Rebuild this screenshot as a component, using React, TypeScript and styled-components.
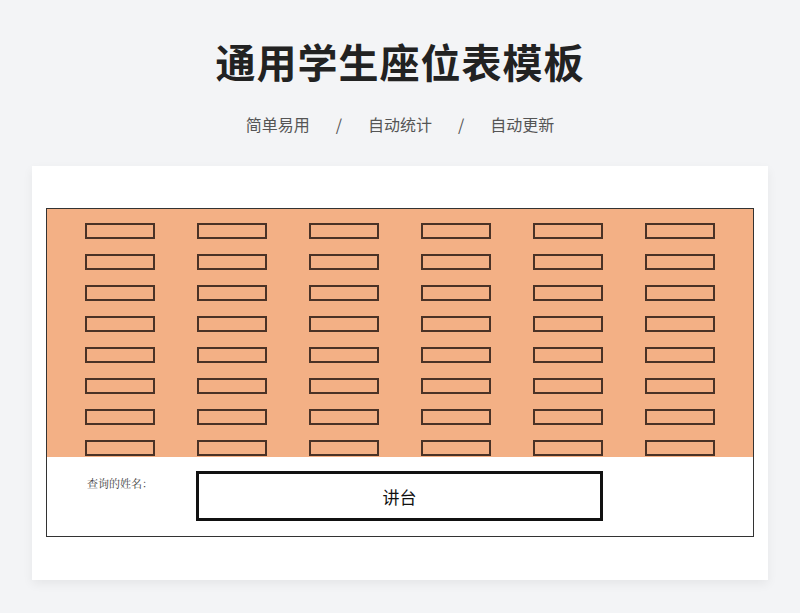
import React from "react";
import styled, { createGlobalStyle } from "styled-components";

const Global = createGlobalStyle`
  html, body { margin: 0; padding: 0; background: #f3f4f6; }
  body { font-family: "Noto Sans CJK SC", "Noto Sans", sans-serif; }
`;

const Page = styled.div`
  width: 800px; height: 613px; box-sizing: border-box;
  padding-top: 33px; display: flex; flex-direction: column; align-items: center;
`;
const Title = styled.h1`
  margin: 0; height: 56px; line-height: 56px; font-size: 40px; font-weight: 700; color: #222;
  letter-spacing: 1px;
`;
const Sub = styled.div`
  margin-top: 23px; display: flex; gap: 26px; font-size: 16px; color: #555; line-height: 24px;
`;
const Card = styled.div`
  margin-top: 30px; width: 736px; height: 414px; background: #fff;
  box-shadow: 0 4px 10px rgba(0,0,0,0.06); box-sizing: border-box; padding: 42px 14px 0 14px;
`;
const Frame = styled.div`
  width: 708px; height: 329px; border: 1.5px solid #333; box-sizing: border-box;
  display: flex; flex-direction: column;
`;
const Seats = styled.div`
  background: #f3b085; height: 248px; box-sizing: border-box; padding: 14px 0 0 38px;
  display: grid; grid-template-columns: repeat(6, 70px); column-gap: 42px;
  grid-auto-rows: 16px; row-gap: 15px;
`;
const Seat = styled.div`
  border: 2px solid #4a3226; box-sizing: border-box;
`;
const Bottom = styled.div`
  display: flex; padding: 14px 0 0 40px;
`;
const Label = styled.div`
  font-family: "Noto Serif CJK SC", "Noto Sans CJK SC", serif; font-size: 11px; color: #444;
  width: 109px; margin-top: 4px;
`;
const Podium = styled.div`
  width: 407px; height: 50px; border: 3px solid #111; box-sizing: border-box;
  display: flex; align-items: center; justify-content: center; font-size: 17px; color: #111;
`;

export default function App() {
  return (
    <Page>
      <Global />
      <Title>通用学生座位表模板</Title>
      <Sub><span>简单易用</span><span>/</span><span>自动统计</span><span>/</span><span>自动更新</span></Sub>
      <Card>
        <Frame>
          <Seats>{Array.from({ length: 48 }).map((_, i) => <Seat key={i} />)}</Seats>
          <Bottom>
            <Label>查询的姓名：</Label>
            <Podium>讲台</Podium>
          </Bottom>
        </Frame>
      </Card>
    </Page>
  );
}
